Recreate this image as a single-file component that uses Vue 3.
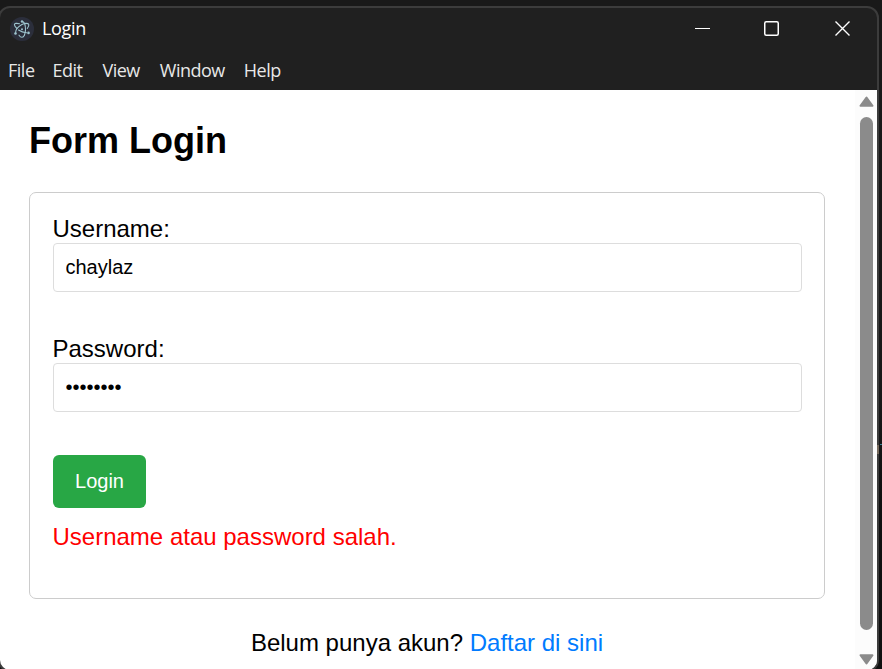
<script setup>
import { ref } from 'vue'

const menus = ['File', 'Edit', 'View', 'Window', 'Help']
const username = ref('chaylaz')
const password = ref('password')
const error = ref('Username atau password salah.')
</script>

<template>
  <div class="desktop">
    <div class="window">
      <header class="titlebar">
        <svg class="logo" width="24" height="24" viewBox="0 0 24 24">
          <circle cx="12" cy="12" r="12" fill="#2b2e3b" />
          <g fill="none" stroke="#9dc3cd" stroke-width="1.100" stroke-linecap="round" stroke-linejoin="round">
            <path d="M9.500 6.700C6.500 6 4.300 6.300 4.400 7.700C4.500 9 5.500 10.200 7 11.500" />
            <path d="M8.500 13C10.700 14.500 13.500 15.500 16.500 15.700" />
            <path d="M5.600 15.500C5.500 13 8 9.800 11.500 7.700C14.500 6 18 6 18.700 7.300C19.200 8.500 18.500 10 17.300 11.500" />
            <path d="M13 4.800C14.700 5.800 15.500 9 15.500 12.500C15.500 14.800 15.100 16.500 14.500 18" />
            <path d="M9 18.200C10 19.700 11 20.300 12 20.300C13 20.300 13.900 19.500 14.500 18" />
          </g>
          <g fill="#9dc3cd">
            <circle cx="12" cy="12.300" r="1" />
            <circle cx="12" cy="4.500" r="1.200" />
            <circle cx="5.500" cy="16.500" r="1.300" />
            <circle cx="18.500" cy="15.900" r="1.300" />
          </g>
        </svg>
        <span class="title">Login</span>
        <div class="controls">
          <svg width="16" height="16" viewBox="0 0 16 16"><path d="M0 7.500H15" stroke="#fff" /></svg>
          <svg width="16" height="16" viewBox="0 0 16 16"><rect x=".75" y=".75" width="13.500" height="13.500" rx="1.500" fill="none" stroke="#fff" stroke-width="1.500" /></svg>
          <svg width="16" height="16" viewBox="0 0 16 16"><path d="M.5 .5L14.500 14.500M14.500 .5L.5 14.500" stroke="#fff" stroke-width="1.400" /></svg>
        </div>
      </header>
      <nav class="menubar">
        <span v-for="m in menus" :key="m">{{ m }}</span>
      </nav>
      <div class="viewport">
        <main class="page">
          <h2>Form Login</h2>
          <form class="card" @submit.prevent>
            <label for="username">Username:</label>
            <input id="username" v-model="username" type="text" />
            <label for="password">Password:</label>
            <input id="password" v-model="password" type="password" />
            <button type="submit">Login</button>
            <p class="error">{{ error }}</p>
          </form>
          <p class="register">Belum punya akun? <a href="#">Daftar di sini</a></p>
        </main>
        <div class="scrollbar">
          <svg width="15" height="11" viewBox="0 0 15 11"><path d="M7.500 1.500L13.500 9.800H1.500Z" fill="#8b8b8b" stroke="#8b8b8b" stroke-width="2" stroke-linejoin="round" /></svg>
          <div class="thumb"></div>
          <svg width="15" height="11" viewBox="0 0 15 11"><path d="M7.500 9.500L13.500 1.200H1.500Z" fill="#8b8b8b" stroke="#8b8b8b" stroke-width="2" stroke-linejoin="round" /></svg>
        </div>
      </div>
    </div>
    <svg class="behind" width="5" height="10" viewBox="0 0 5 10">
      <path d="M1 1V10" stroke="#75695c" stroke-width="2" />
      <path d="M3 .5H5" stroke="#3c8296" stroke-width="1" />
    </svg>
  </div>
</template>

<style>
body {
  margin: 0;
  overflow: hidden;
}
</style>

<style scoped>
.desktop {
  position: relative;
  box-sizing: border-box;
  width: 882px;
  height: 669px;
  padding-top: 6px;
  background: linear-gradient(#191919, #191919 60%, #101010 75%);
  overflow: hidden;
}
.behind {
  position: absolute;
  top: 444px;
  left: 877px;
}
.window {
  box-sizing: border-box;
  display: flex;
  flex-direction: column;
  width: 881px;
  height: 666px;
  margin-left: -2px;
  border: 2px solid #3c3c3c;
  border-radius: 12px;
  background: #202020;
  overflow: hidden;
}
.titlebar {
  display: flex;
  align-items: center;
  height: 41px;
  flex: none;
  padding-left: 10px;
  color: #fff;
  font: 18px/24px "Open Sans", sans-serif;
}
.title {
  margin: 0 0 2px 8px;
  letter-spacing: -0.3px;
}
.controls {
  display: flex;
  gap: 55px;
  margin-left: auto;
  padding-right: 26px;
}
.controls svg {
  display: block;
}
.controls svg:first-child {
  margin-right: -2px;
}
.menubar {
  display: flex;
  gap: 19px;
  flex: none;
  height: 41px;
  box-sizing: border-box;
  padding: 9px 0 0 8px;
  color: #e8e8e8;
  font: 18px/24px "Open Sans", sans-serif;
  letter-spacing: -0.5px;
}
.menubar span:first-child {
  margin-right: -1px;
}
.menubar span:nth-child(3) {
  margin: 0 1px;
}
.viewport {
  display: flex;
  flex: 1;
  min-height: 0;
  background: #fff;
}
.page {
  flex: 1;
  min-width: 0;
  padding: 30px 30px 0 29px;
  font-family: "Liberation Sans", Arial, sans-serif;
  font-size: 24px;
  line-height: 28px;
  color: #000;
}
h2 {
  margin: 0 0 31px;
  font-size: 36px;
  line-height: 41px;
}
.card {
  box-sizing: border-box;
  height: 407px;
  padding: 22px 22px 0 23px;
  border: 1px solid #ccc;
  border-radius: 7px;
}
label {
  display: block;
  margin-left: -0.5px;
}
input {
  display: block;
  box-sizing: border-box;
  width: 100%;
  height: 49px;
  margin: 0 0 43px;
  padding: 0 11.5px;
  border: 1px solid #ddd;
  border-radius: 4px;
  outline: none;
  background: #fff;
  color: #000;
  font: 20px "Liberation Sans", Arial, sans-serif;
}
button {
  display: block;
  width: 93px;
  height: 53px;
  padding: 0;
  border: 0;
  border-radius: 6px;
  background: #28a745;
  color: #fff;
  font: 20px "Liberation Sans", Arial, sans-serif;
}
.error {
  margin: 15px 0 0 -0.5px;
  color: #f00;
}
.register {
  margin: 30px 0 0;
  text-align: center;
}
a {
  color: #007bff;
  text-decoration: none;
}
.scrollbar {
  display: flex;
  flex-direction: column;
  align-items: center;
  box-sizing: border-box;
  width: 22px;
  flex: none;
  padding: 6px 0 0 1px;
  background: #fcfcfc;
}
.scrollbar svg {
  flex: none;
}
.thumb {
  width: 13px;
  height: 513px;
  flex: none;
  margin: 10px 0 24px;
  border-radius: 7px;
  background: #8b8b8b;
}
</style>
